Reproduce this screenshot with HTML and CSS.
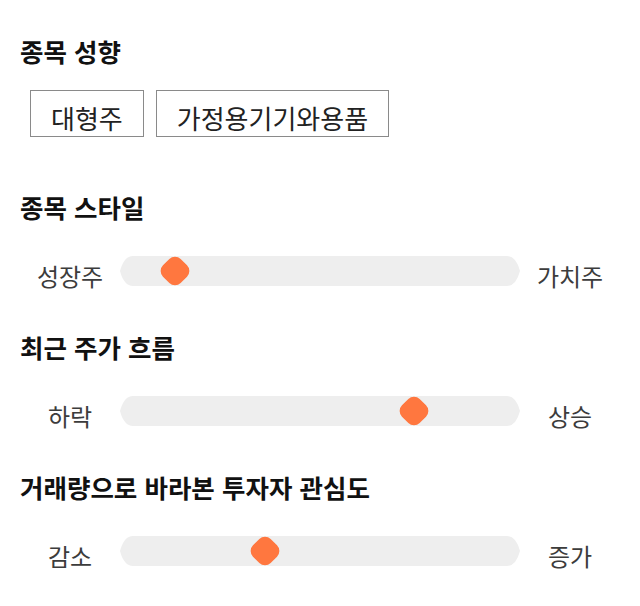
FILE: index.html
```html
<!DOCTYPE html>
<html lang="ko">
<head>
  <meta charset="UTF-8" />
  <meta name="viewport" content="width=device-width, initial-scale=1" />
  <title>종목 분석</title>
  <link rel="stylesheet" href="styles.css">
</head>
<body>

<div class="page">
  <section class="block">
    <h2>종목 성향</h2>
    <div class="tags">
      <span class="tag">대형주</span>
      <span class="tag">가정용기기와용품</span>
    </div>
  </section>

  <section class="block">
    <h2>종목 스타일</h2>
    <div class="scale">
      <span class="scale-label">성장주</span>
      <div class="track"><span class="thumb" style="left: 55px"></span></div>
      <span class="scale-label">가치주</span>
    </div>
  </section>

  <section class="block">
    <h2>최근 주가 흐름</h2>
    <div class="scale">
      <span class="scale-label">하락</span>
      <div class="track"><span class="thumb" style="left: 294px"></span></div>
      <span class="scale-label">상승</span>
    </div>
  </section>

  <section class="block">
    <h2>거래량으로 바라본 투자자 관심도</h2>
    <div class="scale">
      <span class="scale-label">감소</span>
      <div class="track"><span class="thumb" style="left: 145px"></span></div>
      <span class="scale-label">증가</span>
    </div>
  </section>
</div>

</body>
</html>
```

FILE: styles.css
```css
body {
  margin: 0;
  background: #fff;
  color: #111;
  font-family: "Noto Sans CJK KR", "Noto Sans", sans-serif;
}

.page {
  display: flex;
  flex-direction: column;
  padding: 36px 20px 40px;
}

.block + .block {
  margin-top: 46px;
}

h2 {
  margin: 0;
  font-size: 25.5px;
  line-height: 30px;
  font-weight: bold;
  color: #111;
}

.tags {
  display: flex;
  gap: 12px;
  margin: 24px 0 9px 10px;
}

.tag {
  padding: 12px 20px 3px;
  border: 1px solid #8a8a8a;
  font-size: 26px;
  line-height: 30px;
  color: #222;
}

.scale {
  display: grid;
  grid-template-columns: 100px 400px 100px;
  grid-template-rows: 30px;
  align-items: start;
  margin-top: 34px;
}

.scale-label {
  padding-top: 5px;
  font-size: 24px;
  line-height: 30px;
  text-align: center;
  color: #3c3c3c;
}

.track {
  position: relative;
  width: 400px;
  height: 30px;
  background: #eee;
  clip-path: path("M13,0 H387 Q396,0 400,15 Q396,30 387,30 H13 Q4,30 0,15 Q4,0 13,0 Z");
}

.thumb {
  position: absolute;
  top: 50%;
  width: 25px;
  height: 25px;
  border-radius: 8px;
  background: #ff773f;
  transform: translate(-50%, -50%) rotate(45deg);
}
```
